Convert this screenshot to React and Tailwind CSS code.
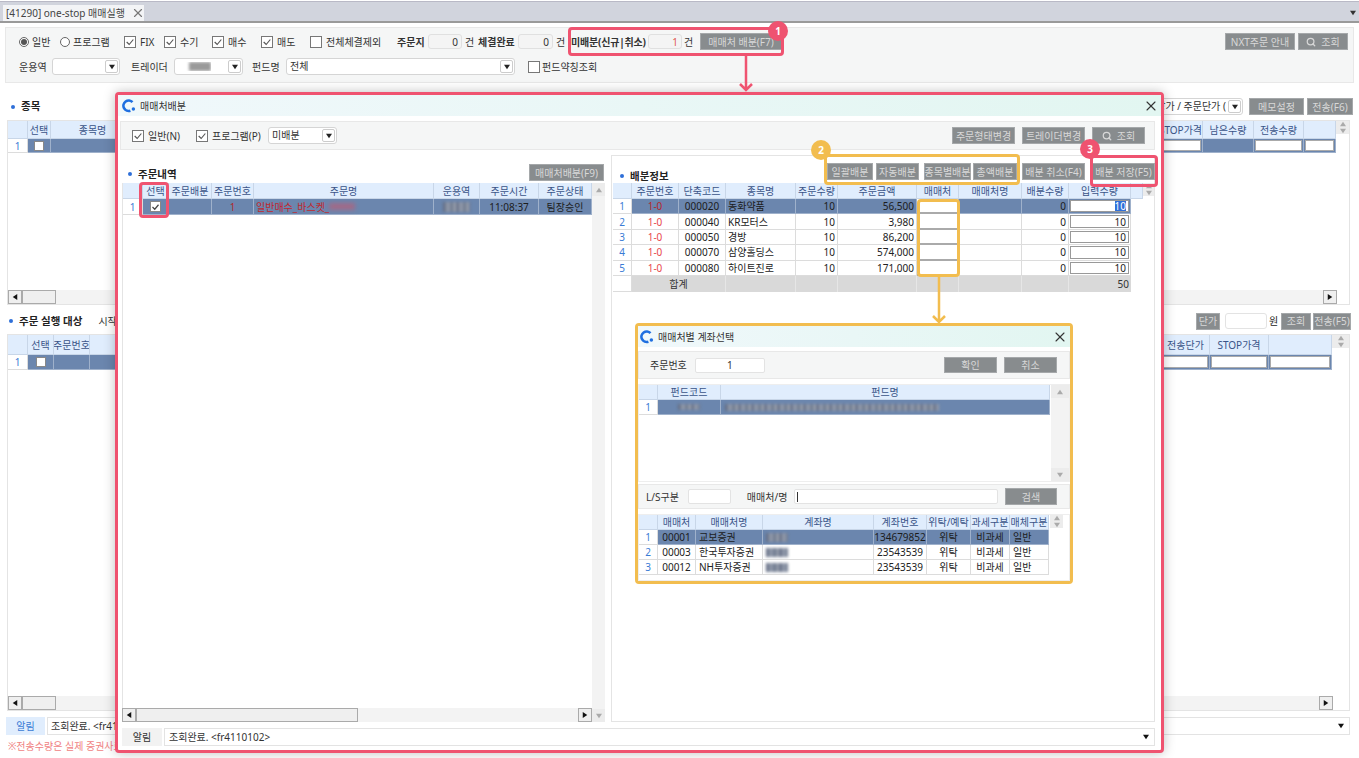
import { Search, X } from "lucide-react";

const PINK = "#ef5370";

const Tri = ({ dir = "down", className = "" }) => {
  const points = {
    down: "0,1 8,1 4,7",
    up: "0,7 8,7 4,1",
    left: "7,0 7,8 1,4",
    right: "1,0 1,8 7,4",
  };
  return (
    <svg viewBox="0 0 8 8" className={`w-[6px] h-[6px] ${className}`} fill="currentColor">
      <polygon points={points[dir]} />
    </svg>
  );
};

const Logo = () => (
  <svg viewBox="0 0 16 16" className="w-[14px] h-[14px] shrink-0">
    <path d="M12 3.6A6 6 0 1 0 9.6 13.4" fill="none" stroke="#1f6fe0" strokeWidth="3" />
    <circle cx="13" cy="11.5" r="2" fill="#1f6fe0" />
  </svg>
);

const Btn = ({ children, className = "" }) => (
  <div className={`h-[17px] bg-[#888c8e] border border-[#a5a8aa] text-[#d8d8d8] flex items-center justify-center whitespace-nowrap shrink-0 ${className}`}>
    {children}
  </div>
);

const Check = ({ label, checked = true, className = "" }) => (
  <div className={`flex items-center gap-[4px] shrink-0 whitespace-nowrap ${className}`}>
    <div className="w-[12px] h-[12px] border border-[#777] bg-white flex items-center justify-center shrink-0">
      {checked && (
        <svg viewBox="0 0 12 12" className="w-[10px] h-[10px]">
          <path d="M2 6l3 3 5-6" fill="none" stroke="#555" strokeWidth="1.4" />
        </svg>
      )}
    </div>
    <span>{label}</span>
  </div>
);

const Radio = ({ label, checked, className = "" }) => (
  <div className={`flex items-center gap-[3px] shrink-0 whitespace-nowrap ${className}`}>
    <div className="w-[10px] h-[10px] rounded-full border border-[#666] bg-white flex items-center justify-center">
      {checked && <div className="w-[6px] h-[6px] rounded-full bg-[#555]" />}
    </div>
    <span>{label}</span>
  </div>
);

const Select = ({ children, className = "" }) => (
  <div className={`h-[17px] bg-white border border-[#d5d5d5] rounded-[3px] flex items-center justify-between pl-[3px] pr-[1px] shrink-0 ${className}`}>
    <span className="overflow-hidden whitespace-nowrap leading-[15px]">{children}</span>
    <div className="w-[13px] h-[13px] bg-white border border-[#ccc] rounded-[2px] flex items-center justify-center text-[#222] shrink-0">
      <Tri className="w-[5px] h-[5px]" />
    </div>
  </div>
);

const Box = ({ children, className = "" }) => (
  <div className={`h-[15px] bg-[#f4f4f4] border border-[#e0e0e0] rounded-[3px] flex items-center justify-end pr-[3px] shrink-0 ${className}`}>
    {children}
  </div>
);

const Bullet = ({ children, className = "" }) => (
  <div className={`flex items-center gap-[6px] font-bold text-[10.5px] text-[#222] whitespace-nowrap ${className}`}>
    <div className="w-[4px] h-[4px] rounded-full bg-[#2f6fd8]" />
    {children}
  </div>
);

const Blur = ({ className = "" }) => (
  <div className={`blur-[1.5px] bg-[repeating-linear-gradient(90deg,#56617a_0px,#98a0b0_5px,#6a758a_9px,#b3b8c2_13px)] ${className}`} />
);

const VScroll = ({ className = "" }) => (
  <div className={`bg-[#f3f3f3] flex flex-col justify-between ${className}`}>
    <div className="h-[13px] bg-[#ececec] flex items-center justify-center text-[#aaa]"><Tri dir="up" /></div>
    <div className="h-[13px] bg-[#ececec] flex items-center justify-center text-[#aaa]"><Tri /></div>
  </div>
);

const HScroll = ({ thumb, className = "" }) => (
  <div className={`h-[14px] bg-[#f3f3f3] flex items-stretch ${className}`}>
    <div className="w-[14px] border border-[#aaa] bg-[#efefef] flex items-center justify-center text-[#111]"><Tri dir="left" /></div>
    <div className={`border border-[#aaa] bg-[#efefef] ${thumb}`} />
    <div className="flex-1" />
    <div className="w-[14px] border border-[#aaa] bg-[#efefef] flex items-center justify-center text-[#111]"><Tri dir="right" /></div>
  </div>
);

const Th = ({ children, className = "" }) => (
  <div className={`bg-[#e0edfd] border-r border-b border-[#c8d6e8] text-[#3a5488] flex items-center justify-center whitespace-nowrap overflow-hidden ${className}`}>
    {children}
  </div>
);

const Td = ({ children, sel, className = "" }) => (
  <div className={`border-r border-b flex items-center whitespace-nowrap overflow-hidden px-[2px] ${sel ? "bg-[#6b86ae] border-[#9fb1cb] text-[#1c1c1c]" : "bg-white border-[#dcdcdc] text-[#222]"} ${className}`}>
    {children}
  </div>
);

const Num = ({ children }) => (
  <div className="bg-white border-r border-b border-[#dcdcdc] text-[#3a7bd5] flex items-center justify-center">{children}</div>
);

const allocRows = [
  ["000020", "동화약품", "56,500"],
  ["000040", "KR모터스", "3,980"],
  ["000050", "경방", "86,200"],
  ["000070", "삼양홀딩스", "574,000"],
  ["000080", "하이트진로", "171,000"],
];

const brokerRows = [
  ["00001", "교보증권", "134679852"],
  ["00003", "한국투자증권", "23543539"],
  ["00012", "NH투자증권", "23543539"],
];

const AllocationInfo = () => (
  <div className="w-[544px] h-[567px] bg-white border border-[#e4e4e4] flex flex-col">
    <div className="h-[27px] flex items-start shrink-0 relative">
      <Bullet className="ml-[8px] mt-[15px]">배분정보</Bullet>
      <div className="ml-auto mt-[7px] flex mr-[-1px]">
        <Btn className="w-[46px]">일괄배분</Btn>
        <Btn className="w-[43px] ml-[3px]">자동배분</Btn>
        <Btn className="w-[47px] ml-[5px]">종목별배분</Btn>
        <Btn className="w-[44px] ml-[2px]">총액배분</Btn>
        <Btn className="w-[63px] ml-[5px]">배분 취소(F4)</Btn>
        <Btn className="w-[63px] ml-[7px]">배분 저장(F5)</Btn>
      </div>
    </div>
    <div className="flex flex-1">
      <div className="w-[532px] ml-[1px]">
        <div className="grid grid-cols-[19px_47px_47px_70px_42px_79px_42px_63px_47px_62px_12px] h-[16px]">
          <Th />
          <Th>주문번호</Th>
          <Th>단축코드</Th>
          <Th>종목명</Th>
          <Th>주문수량</Th>
          <Th>주문금액</Th>
          <Th>매매처</Th>
          <Th>매매처명</Th>
          <Th>배분수량</Th>
          <Th>입력수량</Th>
          <Th />
        </div>
        {allocRows.map((row, i) => {
          const sel = i === 0;
          return (
            <div key={row[0]} className="grid grid-cols-[19px_47px_47px_70px_42px_79px_42px_63px_47px_62px] h-[15.4px]">
              <Num>{i + 1}</Num>
              <Td sel={sel} className={`justify-center ${sel ? "text-[#b3262e]" : "text-[#e8474c]"}`}>1-0</Td>
              <Td sel={sel} className="justify-center">{row[0]}</Td>
              <Td sel={sel}>{row[1]}</Td>
              <Td sel={sel} className="justify-end">10</Td>
              <Td sel={sel} className="justify-end">{row[2]}</Td>
              <Td sel={sel} className="!p-0 !bg-white border-b-2 !border-b-[#aaa]" />
              <Td sel={sel} />
              <Td sel={sel} className="justify-end">0</Td>
              <Td sel={sel} className="!p-[1px]">
                <div className="w-full h-full bg-white border border-[#999] flex items-center justify-end pr-[2px] text-[#222]">
                  {sel ? <span className="bg-[#2f6fd8] text-white">10</span> : "10"}
                </div>
              </Td>
            </div>
          );
        })}
        <div className="grid grid-cols-[19px_94px_70px_42px_79px_42px_63px_47px_62px] h-[16px] text-[#333]">
          <div className="border-r border-b border-[#dcdcdc] bg-white" />
          <div className="bg-[#d9d9d9] border-r border-[#e6e6e6] flex items-center justify-center">합계</div>
          <div className="bg-[#d9d9d9] border-r border-[#e6e6e6]" />
          <div className="bg-[#d9d9d9] border-r border-[#e6e6e6]" />
          <div className="bg-[#d9d9d9] border-r border-[#e6e6e6]" />
          <div className="bg-[#d9d9d9] border-r border-[#e6e6e6]" />
          <div className="bg-[#d9d9d9] border-r border-[#e6e6e6]" />
          <div className="bg-[#d9d9d9] border-r border-[#e6e6e6]" />
          <div className="bg-[#d9d9d9] flex items-center justify-end pr-[2px]">50</div>
        </div>
      </div>
      <VScroll className="w-[11px] h-[13px] overflow-hidden" />
    </div>
  </div>
);

const OrderList = () => (
  <div className="w-[483px] h-[567px] flex flex-col">
    <div className="h-[28px] flex items-start shrink-0">
      <Bullet className="ml-[6px] mt-[14px]">주문내역</Bullet>
      <Btn className="w-[75px] ml-auto mr-[1px] mt-[9px]">매매처배분(F9)</Btn>
    </div>
    <div className="flex flex-1 min-h-0">
      <div className="w-[470px] flex flex-col border-l border-[#e4e4e4]">
        <div className="grid grid-cols-[20px_26px_43px_42px_180px_46px_59px_53px] h-[16px]">
          <Th />
          <Th>선택</Th>
          <Th>주문배분</Th>
          <Th>주문번호</Th>
          <Th>주문명</Th>
          <Th>운용역</Th>
          <Th>주문시간</Th>
          <Th>주문상태</Th>
        </div>
        <div className="grid grid-cols-[20px_26px_43px_42px_180px_46px_59px_53px] h-[16px]">
          <Num>1</Num>
          <Td sel className="justify-center">
            <div className="w-[11px] h-[11px] bg-white border border-[#888] flex items-center justify-center">
              <svg viewBox="0 0 12 12" className="w-[10px] h-[10px]">
                <path d="M2 6l3 3 5-6" fill="none" stroke="#444" strokeWidth="1.6" />
              </svg>
            </div>
          </Td>
          <Td sel />
          <Td sel className="justify-center !text-[#b3262e]">1</Td>
          <Td sel className="!text-[#c0272d] !overflow-visible">
            일반매수_바스켓_
            <div className="w-[26px] h-[7px] blur-[2px] bg-[#a06a88]" />
          </Td>
          <Td sel className="justify-center relative !overflow-visible">
            <Blur className="w-[27px] h-[10px]" />
          </Td>
          <Td sel className="justify-center">11:08:37</Td>
          <Td sel className="justify-center">팀장승인</Td>
        </div>
      </div>
      <VScroll className="w-[13px]" />
    </div>
    <HScroll thumb="w-[222px]" className="w-[470px] mt-[-14px] relative" />
  </div>
);

const BrokerDialog = () => (
  <div className="absolute left-[635px] top-[323px] w-[438px] h-[261px] bg-white border-[3px] border-[#f2bd4f] rounded-[4px] flex flex-col">
    <div className="h-[21px] bg-gradient-to-r from-[#f0f8fb] to-[#e2f6f1] flex items-center px-[2px] gap-[4px] shrink-0">
      <Logo />
      <span className="text-[#333]">매매처별 계좌선택</span>
      <X className="w-[16px] h-[16px] ml-auto text-[#333]" strokeWidth={1.6} />
    </div>
    <div className="h-[28px] mt-[4px] bg-[#f5f6f6] border border-[#e8e8e8] flex items-center pl-[11px] pr-[12px] shrink-0">
      <span className="text-[#333]">주문번호</span>
      <div className="w-[70px] h-[15px] ml-[8px] bg-white border border-[#e3e3e3] rounded-[2px] flex items-center justify-center">1</div>
      <Btn className="w-[53px] ml-auto !h-[16px]">확인</Btn>
      <Btn className="w-[53px] ml-[7px] !h-[16px]">취소</Btn>
    </div>
    <div className="h-[98px] mt-[5px] flex border border-[#eee] shrink-0">
      <div className="w-[412px]">
        <div className="grid grid-cols-[19px_63px_329px] h-[15px]">
          <Th />
          <Th>펀드코드</Th>
          <Th>펀드명</Th>
        </div>
        <div className="grid grid-cols-[19px_63px_329px] h-[15px]">
          <Num>1</Num>
          <Td sel className="justify-center"><Blur className="w-[22px] h-[6px]" /></Td>
          <Td sel className="pl-[4px]"><Blur className="w-[214px] h-[7px]" /></Td>
        </div>
      </div>
      <VScroll className="w-[13px] flex-1" />
    </div>
    <div className="h-[25px] mt-[2px] bg-[#f5f6f6] border border-[#e8e8e8] flex items-center pl-[7px] pr-[12px] shrink-0">
      <span className="text-[#333]">L/S구분</span>
      <div className="w-[43px] h-[15px] ml-[9px] bg-white border border-[#e3e3e3] rounded-[2px]" />
      <span className="ml-[16px] text-[#333]">매매처/명</span>
      <div className="w-[204px] h-[15px] ml-[7px] bg-white border border-[#e3e3e3] rounded-[2px] flex items-center pl-[2px]">
        <div className="w-[1px] h-[10px] bg-[#333]" />
      </div>
      <Btn className="w-[52px] ml-auto">검색</Btn>
    </div>
    <div className="mt-[5px] flex border border-[#eee] flex-1 min-h-0">
      <div className="w-[411px]">
        <div className="grid grid-cols-[19px_38px_67px_111px_53px_44px_39px_39px] h-[15px]">
          <Th />
          <Th>매매처</Th>
          <Th>매매처명</Th>
          <Th>계좌명</Th>
          <Th>계좌번호</Th>
          <Th>위탁/예탁</Th>
          <Th>과세구분</Th>
          <Th>매체구분</Th>
        </div>
        {brokerRows.map((row, i) => {
          const sel = i === 0;
          return (
            <div key={row[0]} className="grid grid-cols-[19px_38px_67px_111px_53px_44px_39px_39px] h-[15px]">
              <Num>{i + 1}</Num>
              <Td sel={sel} className="justify-center">{row[0]}</Td>
              <Td sel={sel} className="pl-[3px]">{row[1]}</Td>
              <Td sel={sel} className="pl-[3px]"><Blur className="w-[22px] h-[9px]" /></Td>
              <Td sel={sel} className="justify-center">{row[2]}</Td>
              <Td sel={sel} className="justify-center">위탁</Td>
              <Td sel={sel} className="justify-center">비과세</Td>
              <Td sel={sel} className="pl-[3px]">일반</Td>
            </div>
          );
        })}
      </div>
      <VScroll className="w-[13px] h-[13px] overflow-hidden" />
    </div>
  </div>
);

const AllocationDialog = () => (
  <div className="absolute left-[115px] top-[92px] w-[1049px] h-[661px] bg-white border-[3px] border-[#ef5370] rounded-[4px] flex flex-col shadow-[0_0_12px_rgba(0,0,0,0.25)]">
    <div className="h-[21px] bg-gradient-to-r from-[#f0f8fb] to-[#e2f6f1] flex items-center pl-[4px] gap-[4px] shrink-0">
      <Logo />
      <span className="text-[#333]">매매처배분</span>
      <X className="w-[16px] h-[16px] ml-auto mr-[2px] text-[#333]" strokeWidth={1.6} />
    </div>
    <div className="h-[29px] mt-[5px] mx-[2px] w-[1035px] bg-[#f5f6f6] border border-[#e8e8e8] flex items-center pl-[11px] shrink-0">
      <Check label="일반(N)" className="w-[64px]" />
      <Check label="프로그램(P)" className="w-[72px]" />
      <Select className="w-[69px]">미배분</Select>
      <Btn className="w-[63px] ml-auto">주문형태변경</Btn>
      <Btn className="w-[63px] ml-[7px]">트레이더변경</Btn>
      <Btn className="w-[53px] ml-[7px] mr-[9px] gap-[5px]"><Search className="w-[10px] h-[10px]" strokeWidth={3} />조회</Btn>
    </div>
    <div className="flex mt-[5px] pl-[4px] gap-[6px] shrink-0">
      <OrderList />
      <AllocationInfo />
    </div>
    <div className="flex h-[18px] mt-[6px] ml-[4px] w-[1033px] shrink-0 text-[#333]">
      <div className="w-[40px] bg-[#f2f2f2] flex items-center justify-center">알림</div>
      <div className="flex-1 ml-[2px] bg-white border border-[#e3e3e3] flex items-center justify-between pl-[4px] pr-[5px]">
        조회완료. &lt;fr4110102&gt;
        <Tri className="text-[#111]" />
      </div>
    </div>
  </div>
);

// 빨강/노랑 강조 표시
const Annotations = () => (
  <>
    <div className="absolute left-[568px] top-[27px] w-[216px] h-[29px] border-[3px] border-[#ef5370] rounded-[4px]" />
    <div className="absolute left-[139px] top-[182px] w-[30px] h-[36px] border-[3px] border-[#ef5370] rounded-[4px]" />
    <div className="absolute left-[824px] top-[154px] w-[196px] h-[31px] border-[3px] border-[#f2bd4f] rounded-[4px]" />
    <div className="absolute left-[1090px] top-[155px] w-[68px] h-[32px] border-[3px] border-[#ef5370] rounded-[4px]" />
    <div className="absolute left-[917px] top-[199px] w-[43px] h-[78px] border-[3px] border-[#f2bd4f] rounded-[4px]" />
    <svg className="absolute left-[736px] top-[55px] w-[20px] h-[38px]" viewBox="0 0 20 38" fill="none" stroke={PINK} strokeWidth="2.5">
      <path d="M10 0V35M4 29l6 6 6-6" />
    </svg>
    <svg className="absolute left-[929px] top-[276px] w-[20px] h-[48px]" viewBox="0 0 20 48" fill="none" stroke="#f2bd4f" strokeWidth="2.5">
      <path d="M10 0V46M4 40l6 6 6-6" />
    </svg>
    <div className="absolute left-[768px] top-[21px] w-[20px] h-[20px] rounded-full bg-[#ef5370] text-white font-bold flex items-center justify-center">1</div>
    <div className="absolute left-[811px] top-[140px] w-[20px] h-[20px] rounded-full bg-[#f2bd4f] text-white font-bold flex items-center justify-center">2</div>
    <div className="absolute left-[1080px] top-[139px] w-[20px] h-[20px] rounded-full bg-[#ef5370] text-white font-bold flex items-center justify-center">3</div>
  </>
);

export default function App() {
  return (
    <div className="relative w-[1359px] h-[758px] overflow-hidden bg-white text-[10px] leading-none text-[#333] font-['Noto_Sans','Noto_Sans_CJK_KR',sans-serif]">
      {/* 탭 영역 */}
      <div className="h-[22px] mt-[1px] bg-[#d1d4dd] border-t border-[#b9b9c6] border-b-2 border-b-[#9a9a9a] flex items-end pl-[3px] pr-[3px]">
        <div className="w-[141px] h-[16px] bg-[#f3f4f6] flex items-center pl-[3px] gap-[6px] text-[#444] whitespace-nowrap">
          [41290] one-stop 매매실행
          <X className="w-[14px] h-[14px] text-[#777] shrink-0" />
        </div>
        <Tri className="ml-auto mb-[5px] text-[#333]" />
      </div>

      {/* 조회 조건 */}
      <div className="ml-[5px] mt-[4px] w-[1349px] h-[56px] bg-[#f5f6f6] border border-[#e8e8e8] pl-[13px] pr-[5px] flex flex-col">
        <div className="flex items-center h-[17px] mt-[5px]">
          <Radio label="일반" checked className="w-[41px]" />
          <Radio label="프로그램" className="w-[64px]" />
          <Check label="FIX" className="w-[40px]" />
          <Check label="수기" className="w-[48px]" />
          <Check label="매수" className="w-[49px]" />
          <Check label="매도" className="w-[49px]" />
          <Check label="전체체결제외" checked={false} className="w-[87px]" />
          <span className="w-[31px] font-bold whitespace-nowrap">주문지</span>
          <Box className="w-[34px]">0</Box>
          <span className="w-[16px] pl-[3px]">건</span>
          <span className="w-[40px] font-bold whitespace-nowrap">체결완료</span>
          <Box className="w-[35px]">0</Box>
          <span className="w-[18px] pl-[3px]">건</span>
          <span className="w-[77px] font-bold whitespace-nowrap tracking-[-0.2px]">미배분(신규|취소)</span>
          <Box className="w-[34px] !text-[#e0584f]">1</Box>
          <span className="w-[18px] pl-[2px]">건</span>
          <Btn className="w-[82px]">매매처 배분(F7)</Btn>
          <Btn className="w-[70px] ml-auto">NXT주문 안내</Btn>
          <Btn className="w-[50px] ml-[3px] gap-[5px]"><Search className="w-[10px] h-[10px]" strokeWidth={3} />조회</Btn>
        </div>
        <div className="flex items-center h-[17px] mt-[8px]">
          <span className="w-[33px]">운용역</span>
          <Select className="w-[68px]" />
          <span className="w-[43px] ml-[11px]">트레이더</span>
          <Select className="w-[69px]">
            <div className="w-[22px] h-[9px] ml-[11px] blur-[1.5px] bg-[#9a9a9a]" />
          </Select>
          <span className="w-[34px] ml-[9px]">펀드명</span>
          <Select className="w-[229px]">전체</Select>
          <Check label="펀드약칭조회" checked={false} className="ml-[13px] !gap-[2px]" />
        </div>
      </div>

      {/* 종목 */}
      <div className="flex items-center h-[17px] mt-[15px] pl-[11px] pr-[6px]">
        <Bullet>종목</Bullet>
        <div className="ml-auto flex items-center">
          <Select className="w-[100px]">시장가 / 주문단가 (</Select>
          <Btn className="w-[55px] ml-[6px]">메모설정</Btn>
          <Btn className="w-[46px] ml-[3px]">전송(F6)</Btn>
        </div>
      </div>
      <div className="ml-[7px] mt-[5px] w-[1343px] h-[185px] border border-[#e4e4e4] relative flex">
        <div className="flex-1 min-w-0">
          <div className="grid grid-cols-[20px_23px_84px_1fr_44px_51px_50px_32px] h-[18px]">
            <Th />
            <Th>선택</Th>
            <Th>종목명</Th>
            <Th />
            <Th>STOP가격</Th>
            <Th>남은수량</Th>
            <Th>전송수량</Th>
            <Th />
          </div>
          <div className="grid grid-cols-[20px_23px_84px_1fr_44px_51px_50px_32px] h-[14px]">
            <Num>1</Num>
            <Td sel className="justify-center"><div className="w-[10px] h-[10px] bg-white border border-[#888]" /></Td>
            <Td sel />
            <Td sel />
            <Td sel className="!p-[1px]"><div className="w-full h-full bg-white border border-[#aaa]" /></Td>
            <Td sel />
            <Td sel className="!p-[1px]"><div className="w-full h-full bg-white border border-[#aaa]" /></Td>
            <Td sel className="!p-[1px]"><div className="w-full h-full bg-white border border-[#aaa]" /></Td>
          </div>
        </div>
        <VScroll className="w-[13px] h-[13px] overflow-hidden" />
        <HScroll thumb="w-[34px]" className="absolute left-0 bottom-0 w-[1329px]" />
      </div>

      {/* 주문 실행 대상 */}
      <div className="flex items-center h-[16px] mt-[8px] pl-[9px] pr-[8px]">
        <Bullet>주문 실행 대상</Bullet>
        <span className="ml-[16px]">시작</span>
        <Btn className="w-[24px] ml-auto">단가</Btn>
        <div className="w-[42px] h-[16px] ml-[5px] bg-white border border-[#e3e3e3] rounded-[3px]" />
        <span className="w-[14px] pl-[2px] text-[#222]">원</span>
        <Btn className="w-[30px]">조회</Btn>
        <Btn className="w-[38px] ml-[2px]">전송(F5)</Btn>
      </div>
      <div className="ml-[7px] mt-[5px] w-[1343px] h-[377px] border border-[#e4e4e4] relative flex">
        <div className="flex-1 min-w-0">
          <div className="grid grid-cols-[20px_26px_36px_1fr_48px_59px_63px] h-[20px]">
            <Th />
            <Th>선택</Th>
            <Th>주문번호</Th>
            <Th />
            <Th>전송단가</Th>
            <Th>STOP가격</Th>
            <Th />
          </div>
          <div className="grid grid-cols-[20px_26px_36px_1fr_48px_59px_63px] h-[15px]">
            <Num>1</Num>
            <Td sel className="justify-center"><div className="w-[10px] h-[10px] bg-white border border-[#888]" /></Td>
            <Td sel />
            <Td sel />
            <Td sel className="!p-[1px]"><div className="w-full h-full bg-white border border-[#aaa]" /></Td>
            <Td sel className="!p-[1px]"><div className="w-full h-full bg-white border border-[#aaa]" /></Td>
            <Td sel className="!p-[1px]"><div className="w-full h-full bg-white border border-[#aaa]" /></Td>
          </div>
        </div>
        <VScroll className="w-[17px] h-[13px] overflow-hidden" />
        <HScroll thumb="w-[34px]" className="absolute left-0 bottom-0 w-[1325px]" />
      </div>

      {/* 알림 */}
      <div className="flex h-[18px] mt-[6px] ml-[6px] w-[1344px]">
        <div className="w-[39px] bg-[#e0edfd] text-[#3a7bd5] flex items-center justify-center">알림</div>
        <div className="flex-1 ml-[2px] bg-white border border-[#e3e3e3] flex items-center justify-between pl-[3px] pr-[5px]">
          조회완료. &lt;fr4110102&gt;
          <Tri className="text-[#111]" />
        </div>
      </div>
      <div className="mt-[6px] ml-[8px] text-[#f0827f]">※전송수량은 실제 증권사로 전송되는 수량입니다.</div>

      <AllocationDialog />
      <BrokerDialog />
      <Annotations />
    </div>
  );
}
